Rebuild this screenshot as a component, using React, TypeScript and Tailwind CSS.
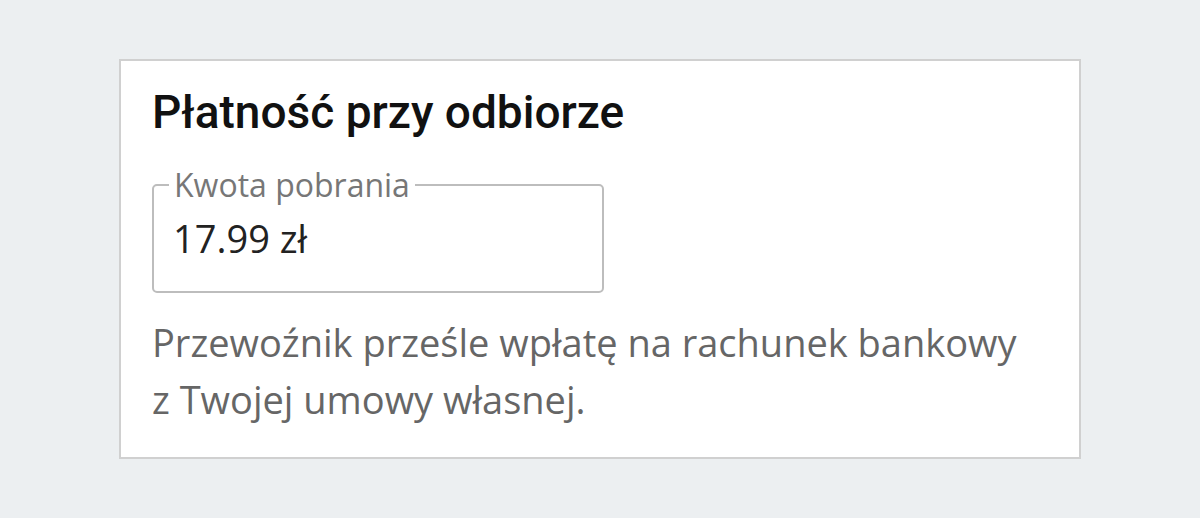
export default function App() {
  return (
    <main className="min-h-[518px] bg-[#eceff1] pt-[59px] pl-[119px]">
      <section className="w-[962px] h-[400px] border-2 border-[#d0d0d0] bg-white px-[31px] pt-[24px]">
        <h1 className="font-['Roboto',sans-serif] text-[46px] font-medium leading-[54px] text-[#111]">
          Płatność przy odbiorze
        </h1>

        <fieldset className="mt-[28px] w-[452px] rounded-[5px] border-2 border-[#bdbdbd] pl-[15px] pr-4 pb-[29px] font-['Open_Sans',sans-serif]">
          <legend className="px-[5px] text-[32px] leading-[36px] text-[#777]">
            Kwota pobrania
          </legend>
          <p className="mt-[11px] ml-[4px] text-[38px] leading-[48px] text-[#222]">17.99 zł</p>
        </fieldset>

        <p className="mt-[21px] font-['Open_Sans',sans-serif] text-[38px] leading-[57px] text-[#666]">
          Przewoźnik prześle wpłatę na rachunek bankowy
          <br />
          z Twojej umowy własnej.
        </p>
      </section>
    </main>
  );
}
